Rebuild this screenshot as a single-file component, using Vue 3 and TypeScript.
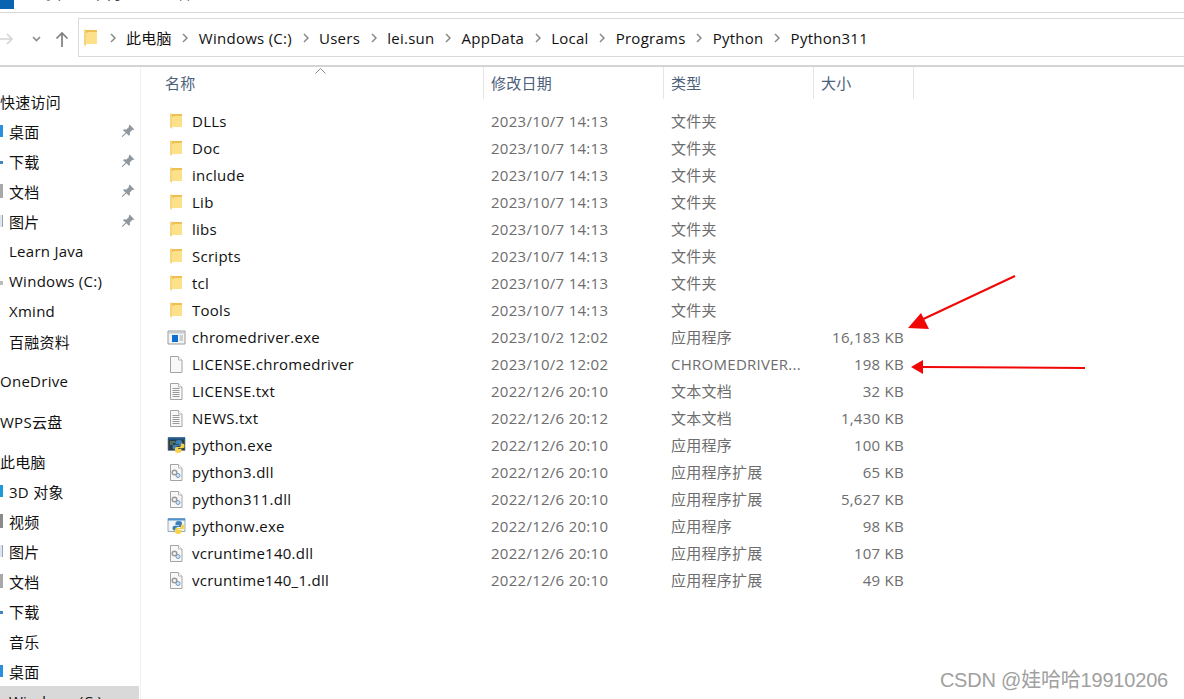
<script setup lang="ts">
type Kind = 'folder' | 'exe' | 'blank' | 'txt' | 'py' | 'dll' | 'pyw'

interface FileRow {
  name: string
  date: string
  type: string
  size: string
  kind: Kind
}

interface NavItem {
  label: string
  peek?: string
  pinned?: boolean
  top?: boolean
  gap?: boolean
  active?: boolean
}

const crumbs = ['此电脑', 'Windows (C:)', 'Users', 'lei.sun', 'AppData', 'Local', 'Programs', 'Python', 'Python311']

const nav: NavItem[] = [
  { label: '快速访问', top: true },
  { label: '桌面', peek: 'desk', pinned: true },
  { label: '下载', peek: 'down', pinned: true },
  { label: '文档', peek: 'doc', pinned: true },
  { label: '图片', peek: 'pic', pinned: true },
  { label: 'Learn Java' },
  { label: 'Windows (C:)', peek: 'drive' },
  { label: 'Xmind' },
  { label: '百融资料' },
  { label: 'OneDrive', top: true, gap: true },
  { label: 'WPS云盘', top: true, gap: true },
  { label: '此电脑', top: true, gap: true },
  { label: '3D 对象', peek: 'cube' },
  { label: '视频', peek: 'video' },
  { label: '图片', peek: 'pic' },
  { label: '文档', peek: 'doc' },
  { label: '下载', peek: 'down' },
  { label: '音乐' },
  { label: '桌面', peek: 'desk' },
  { label: 'Windows (C:)', active: true }
]

const folderDate = '2023/10/7 14:13'
const files: FileRow[] = [
  ...['DLLs', 'Doc', 'include', 'Lib', 'libs', 'Scripts', 'tcl', 'Tools'].map((name) => ({
    name,
    date: folderDate,
    type: '文件夹',
    size: '',
    kind: 'folder' as Kind
  })),
  { name: 'chromedriver.exe', date: '2023/10/2 12:02', type: '应用程序', size: '16,183 KB', kind: 'exe' },
  { name: 'LICENSE.chromedriver', date: '2023/10/2 12:02', type: 'CHROMEDRIVER...', size: '198 KB', kind: 'blank' },
  { name: 'LICENSE.txt', date: '2022/12/6 20:10', type: '文本文档', size: '32 KB', kind: 'txt' },
  { name: 'NEWS.txt', date: '2022/12/6 20:12', type: '文本文档', size: '1,430 KB', kind: 'txt' },
  { name: 'python.exe', date: '2022/12/6 20:10', type: '应用程序', size: '100 KB', kind: 'py' },
  { name: 'python3.dll', date: '2022/12/6 20:10', type: '应用程序扩展', size: '65 KB', kind: 'dll' },
  { name: 'python311.dll', date: '2022/12/6 20:10', type: '应用程序扩展', size: '5,627 KB', kind: 'dll' },
  { name: 'pythonw.exe', date: '2022/12/6 20:10', type: '应用程序', size: '98 KB', kind: 'pyw' },
  { name: 'vcruntime140.dll', date: '2022/12/6 20:10', type: '应用程序扩展', size: '107 KB', kind: 'dll' },
  { name: 'vcruntime140_1.dll', date: '2022/12/6 20:10', type: '应用程序扩展', size: '49 KB', kind: 'dll' }
]
</script>

<template>
  <div class="window">
    <header class="ribbon">
      <span class="tab-file"></span>
      <span class="tab">主页</span>
      <span class="tab">共享</span>
      <span class="tab">查看</span>
    </header>

    <div class="toolbar">
      <div class="nav-buttons">
        <svg class="forward" width="15" height="14" viewBox="0 0 15 14" fill="none" stroke="#d4d4d4" stroke-width="1.6">
          <path d="M0 7h13M8 2l5 5-5 5" />
        </svg>
        <svg class="drop" width="9" height="6" viewBox="0 0 9 6" fill="none" stroke="#8a8a8a" stroke-width="1.6">
          <path d="M1 1l3.5 3.5L8 1" />
        </svg>
        <svg class="up" width="14" height="16" viewBox="0 0 14 16" fill="none" stroke="#7f7f7f" stroke-width="1.7">
          <path d="M7 16V2M1.5 7.5L7 2l5.5 5.5" />
        </svg>
      </div>
      <div class="address">
        <svg class="addr-folder" width="13" height="17" viewBox="0 0 13 17">
          <path d="M0 1l2 -1v17l-2-1z" fill="#f5d67e" />
          <path d="M2 1h11v14H2z" fill="#fde08a" />
          <path d="M2 1h11v2H5L2 4z" fill="#eec053" />
        </svg>
        <template v-for="c in crumbs" :key="c">
          <svg class="chev" width="6" height="10" viewBox="0 0 6 10" fill="none" stroke="#888" stroke-width="1.5">
            <path d="M1 1l4 4-4 4" />
          </svg>
          <span class="crumb">{{ c }}</span>
        </template>
      </div>
    </div>

    <div class="body">
      <aside class="sidebar">
        <div
          v-for="(item, i) in nav"
          :key="i"
          class="nav-item"
          :class="{ top: item.top, gap: item.gap, active: item.active }"
        >
          <span v-if="!item.top" class="peek" :class="item.peek"></span>
          <span class="nav-label">{{ item.label }}</span>
          <svg v-if="item.pinned" class="pin" width="14" height="14" viewBox="0 0 14 14" fill="#8f979f">
            <path d="M8.6 0.6l4.800 4.800-1.300.7-.7-.3-2.600 2.600.2 2.400-1 1-2.600-2.600-3.600 3.600-.9.1.1-.9 3.600-3.600L2 6.300l1-1 2.400.2L8 2.900l-.3-.7z" />
          </svg>
        </div>
      </aside>

      <main class="list">
        <div class="sort-caret">
          <svg width="11" height="6" viewBox="0 0 11 6" fill="none" stroke="#8c8c8c">
            <path d="M.5 5.500l5-5 5 5" />
          </svg>
        </div>
        <div class="columns">
          <div class="col">名称</div>
          <div class="col">修改日期</div>
          <div class="col">类型</div>
          <div class="col">大小</div>
        </div>

        <div class="rows">
          <div v-for="f in files" :key="f.name" class="row">
            <div class="name">
              <svg class="file-icon" width="18" height="18" viewBox="0 0 18 18">
                <template v-if="f.kind === 'folder'">
                  <path d="M3 2l2-1v16l-2-1.500z" fill="#f5d67e" />
                  <path d="M5 2h10v13H5z" fill="#fde08a" />
                  <path d="M5 2h10v2H8L5 5z" fill="#eec053" />
                </template>
                <template v-else-if="f.kind === 'exe'">
                  <path d="M1 3h17v13H1z" fill="#f4f4f4" />
                  <path d="M1 3h17v13H1z" fill="none" stroke="#9a9a9a" />
                  <path d="M2 4h15v1.500H2z" fill="#c4ccd4" />
                  <path d="M5 7h6v7H5z" fill="#0a6fd0" />
                  <path d="M12.500 8h3.500M12.500 10h3.500M12.500 12h3.500" stroke="#a8a8a8" />
                </template>
                <template v-else-if="f.kind === 'blank' || f.kind === 'txt' || f.kind === 'dll'">
                  <path d="M3.500 1.500h8l3.500 3.500v12.500H3.500z" fill="#f8f8f8" stroke="#a4a4a4" />
                  <path d="M11.500 1.500V5H15" fill="#fff" stroke="#b4b4b4" />
                  <template v-if="f.kind === 'txt'">
                    <path d="M5.500 6.500h7M5.500 8.500h7M5.500 10.500h7M5.500 12.500h7M5.500 14.500h7" stroke="#9a9a9a" />
                  </template>
                  <template v-if="f.kind === 'dll'">
                    <circle cx="7.500" cy="9.500" r="2.300" fill="none" stroke="#9a9a9a" stroke-width="1.500" />
                    <circle cx="11" cy="12.500" r="2" fill="#d6e6f5" stroke="#6f97bd" />
                  </template>
                </template>
                <template v-else>
                  <path d="M1 1.500h17v13H1z" :fill="f.kind === 'py' ? '#2f3c46' : '#f2f4f7'" stroke="#74879a" stroke-width=".7" />
                  <path d="M1 1.500h17v2H1z" :fill="f.kind === 'py' ? '#1f5f95' : '#4d93cf'" />
                  <path
                    v-if="f.kind === 'py'"
                    d="M3 6h5M3 8h3"
                    stroke="#6fa76f"
                  />
                  <path
                    d="M12 4c-3 0-3.500 1-3.500 2.200V8H12v.7H7.500C6 8.700 5.500 10 5.500 11s.5 2.500 2 2.500H9v-1.700c0-1 .8-1.800 2-1.800h2.500c1 0 1.500-.8 1.500-1.500V6c0-1.200-1-2-3-2z"
                    fill="#3d7fb8"
                  />
                  <path
                    d="M12 4c-3 0-3.500 1-3.500 2.200V8H12v.7H7.500C6 8.700 5.500 10 5.500 11s.5 2.500 2 2.500H9v-1.700c0-1 .8-1.800 2-1.800h2.500c1 0 1.500-.8 1.500-1.500V6c0-1.200-1-2-3-2z"
                    fill="#f6d24a"
                    transform="rotate(180 11.500 10.500)"
                  />
                </template>
              </svg>
              <span>{{ f.name }}</span>
            </div>
            <div class="meta">{{ f.date }}</div>
            <div class="meta">{{ f.type }}</div>
            <div class="meta size">{{ f.size }}</div>
          </div>
        </div>
      </main>
    </div>

    <!-- 标注箭头 -->
    <svg class="marks" width="1184" height="699" viewBox="0 0 1184 699">
      <path d="M1015 276L917 322" stroke="#f00806" stroke-width="2" />
      <path d="M908 328l13-15 8 16z" fill="#f00806" />
      <path d="M922 367L1085 368" stroke="#f00806" stroke-width="2" />
      <path d="M911 367l12-7v14z" fill="#f00806" />
    </svg>
    <div class="watermark">CSDN @娃哈哈19910206</div>
  </div>
</template>

<style>
html,
body {
  margin: 0;
  background: #fff;
}
</style>

<style scoped>
.window {
  position: relative;
  width: 1184px;
  height: 699px;
  overflow: hidden;
  background: #fff;
  color: #111;
  font-family: 'Open Sans', 'Noto Sans CJK SC', sans-serif;
  font-size: 15px;
  letter-spacing: 0.27px;
}

.ribbon {
  display: flex;
  height: 12px;
  border-bottom: 1px solid #d9d9d9;
  overflow: hidden;
}

.tab-file {
  flex: none;
  width: 14px;
  height: 9px;
  background: #0a63b0;
}

.tab {
  flex: none;
  width: 30px;
  margin-top: -17px;
  line-height: 20px;
  color: #333;
  white-space: nowrap;
}

.tab:nth-child(2) {
  margin-left: 17px;
}

.tab:nth-child(3),
.tab:nth-child(4) {
  margin-left: 35px;
}

.toolbar {
  display: flex;
  height: 52px;
  border-bottom: 2px solid #d4d4d4;
}

.nav-buttons {
  display: flex;
  flex: none;
  width: 78px;
  align-items: center;
}

.forward {
  margin-left: -1px;
}

.drop {
  margin-left: 18px;
}

.up {
  margin-left: 14px;
}

.address {
  display: flex;
  flex: 1;
  align-items: center;
  height: 37px;
  margin-top: 5px;
  padding-left: 5px;
  border: 1px solid #d9d9d9;
  border-right: 0;
}

.addr-folder {
  flex: none;
  margin-right: 12.5px;
}

.chev {
  flex: none;
}

.crumb {
  margin: 0 10.5px;
  white-space: nowrap;
}

.body {
  display: flex;
}

.sidebar {
  flex: none;
  width: 141px;
  height: 633px;
  padding-top: 19px;
  box-sizing: border-box;
  border-right: 1px solid #f0f0f0;
}

.nav-item {
  display: flex;
  align-items: center;
  height: 30px;
  margin-right: 1px;
  white-space: nowrap;
}

.nav-item.gap {
  margin-top: 10px;
}

.nav-item.active {
  background: #d9d9d9;
}

.peek {
  flex: none;
  width: 3px;
  height: 12px;
  margin-right: 6px;
}

.peek.desk {
  background: #2a8fdc;
}

.peek.down {
  height: 3px;
  margin-top: 2px;
  background: #3f83c5;
}

.peek.doc {
  height: 14px;
  background: #a8a8a8;
}

.peek.pic {
  background: #dce6f0;
  border-right: 1px solid #9aa5b0;
  box-sizing: border-box;
}

.peek.drive {
  height: 4px;
  margin-top: 4px;
  background: #b8bcc0;
}

.peek.cube {
  background: #1a9bd7;
}

.peek.video {
  height: 14px;
  background: #8a8a8a;
}

.nav-label {
  flex: 1;
}

.pin {
  flex: none;
  margin-right: 4px;
}

.list {
  position: relative;
  flex: 1;
}

.sort-caret {
  position: absolute;
  top: 1px;
  left: 174px;
  line-height: 0;
}

.columns {
  display: grid;
  grid-template-columns: 343px 180px 150px 100px;
  height: 32px;
}

.col {
  padding-left: 7px;
  border-right: 1px solid #e5e5e5;
  color: #4c607a;
  line-height: 32px;
}

.col:first-child {
  padding-left: 24px;
}

.rows {
  padding-top: 8px;
}

.row {
  display: grid;
  grid-template-columns: 343px 180px 150px 90px;
  height: 27px;
  align-items: center;
}

.name {
  display: flex;
  align-items: center;
  gap: 7px;
  padding-left: 26px;
  white-space: nowrap;
}

.file-icon {
  flex: none;
  overflow: visible;
}

.meta {
  padding-left: 7px;
  color: #6d6d6d;
  white-space: nowrap;
}

.size {
  text-align: right;
}

.marks {
  position: absolute;
  inset: 0;
  pointer-events: none;
}

.watermark {
  position: absolute;
  right: 16px;
  bottom: 6px;
  color: #a0a0a0;
  font-family: 'Liberation Sans', 'Noto Sans CJK SC', sans-serif;
  font-size: 20px;
  letter-spacing: -0.2px;
  line-height: 26px;
  white-space: nowrap;
}
</style>
